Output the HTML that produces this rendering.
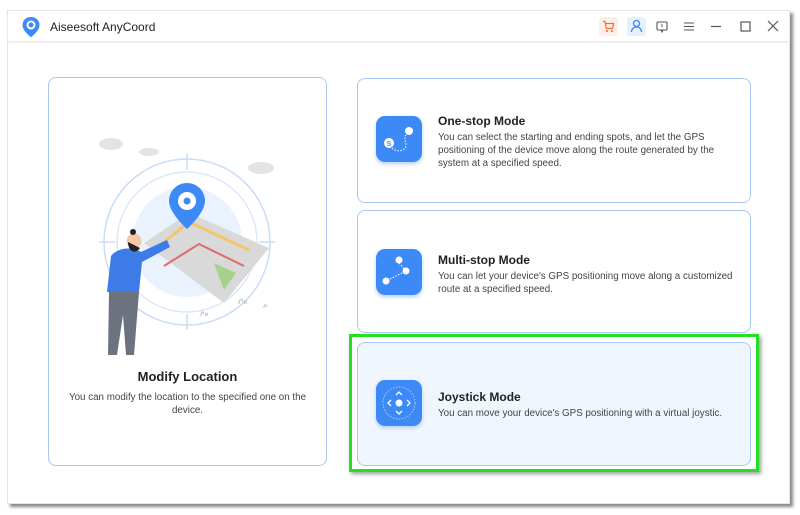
<!DOCTYPE html>
<html><head><meta charset="utf-8"><style>
*{margin:0;padding:0;box-sizing:border-box}
body{width:800px;height:515px;background:#fff;position:relative;overflow:hidden;font-family:"Liberation Sans",sans-serif;color:#333}
.win{position:absolute;left:7px;top:10px;width:783px;height:494px;background:#fff;box-shadow:3px 3px 3px #888;border:1px solid #e4e4e4}
.tb{position:absolute;left:0;top:0;right:0;height:31px;border-bottom:1px solid #ececec;box-shadow:0 1px 2px #f0f0f0}
.title{position:absolute;left:42px;top:9px;font-size:12px;color:#222}
.card{position:absolute;border:1px solid #a9c8f2;border-radius:8px;background:#fff}
.ic{position:absolute;left:18px;width:46px;height:46px;border-radius:9px;background:#3d8af7;box-shadow:0 2px 4px #b8cff0}
.h{position:absolute;left:80px;font-size:12px;font-weight:bold;color:#222}
.p{position:absolute;left:80px;font-size:9.8px;line-height:13px;color:#444;width:305px}
</style></head><body>
<div class="win">
<div class="tb">
<svg style="position:absolute;left:13px;top:5px" width="20" height="22" viewBox="0 0 20 22"><path d="M10 1C5 1 1.5 4.7 1.5 9.2c0 5.5 8.5 12 8.5 12s8.5-6.5 8.5-12C18.5 4.7 15 1 10 1z" fill="#3d8af7"/><circle cx="10" cy="9" r="4.5" fill="#fff"/><circle cx="10" cy="9" r="2.5" fill="#3d8af7"/></svg>
<div class="title">Aiseesoft AnyCoord</div>
<div style="position:absolute;left:591px;top:6px;width:19px;height:19px;background:#fdeee8;border-radius:3px"></div>
<svg style="position:absolute;left:594px;top:9px" width="13" height="13" viewBox="0 0 13 13"><path d="M1 1.5h2l1.5 7h6l1-5H4" fill="none" stroke="#f26b3a" stroke-width="1.2"/><circle cx="5" cy="11" r="1" fill="#f26b3a"/><circle cx="10" cy="11" r="1" fill="#f26b3a"/></svg>
<div style="position:absolute;left:619px;top:6px;width:19px;height:19px;background:#e6f0fd;border-radius:3px"></div>
<svg style="position:absolute;left:622px;top:8px" width="13" height="14" viewBox="0 0 13 14"><circle cx="6.5" cy="4.5" r="3" fill="none" stroke="#3d8af7" stroke-width="1.3"/><path d="M1.5 13c0-3 2.2-5 5-5s5 2 5 5" fill="none" stroke="#3d8af7" stroke-width="1.3"/></svg>
<svg style="position:absolute;left:648px;top:10px" width="12" height="12" viewBox="0 0 12 12"><rect x="1" y="1" width="10" height="8" rx="1" fill="none" stroke="#555" stroke-width="1.1"/><path d="M5 9l1 2 1-2" stroke="#555" fill="none"/><path d="M6 3v3" stroke="#555"/></svg>
<svg style="position:absolute;left:675px;top:10px" width="12" height="11"><path d="M1 2h10M1 5.5h10M1 9h10" stroke="#555" stroke-width="1.1"/></svg>
<svg style="position:absolute;left:702px;top:10px" width="12" height="11"><path d="M1 5.5h10" stroke="#555" stroke-width="1.2"/></svg>
<svg style="position:absolute;left:732px;top:10px" width="12" height="11"><rect x="1" y="1" width="9" height="9" fill="none" stroke="#555" stroke-width="1.2"/></svg>
<svg style="position:absolute;left:759px;top:9px" width="12" height="12"><path d="M1 1l10 10M11 1L1 11" stroke="#555" stroke-width="1.2"/></svg>
</div>
</div>

<div class="card" style="left:48px;top:77px;width:279px;height:389px">
<svg style="position:absolute;left:40px;top:50px" width="200" height="230" viewBox="0 0 200 230">
<g fill="#e4e4e4"><ellipse cx="22" cy="16" rx="12" ry="6"/><ellipse cx="60" cy="24" rx="10" ry="4"/><ellipse cx="172" cy="40" rx="13" ry="6"/></g>
<circle cx="98" cy="114" r="83" fill="none" stroke="#c9dcf8" stroke-width="1.5"/>
<circle cx="98" cy="114" r="70" fill="none" stroke="#dce8fa" stroke-width="1.5"/>
<circle cx="98" cy="114" r="55" fill="#eaf2fd"/>
<path d="M98 26v16M98 186v16M10 114h16M170 114h16" stroke="#c9dcf8" stroke-width="1.5"/>
<path d="M55 115l45-30 80 35-45 55z" fill="#d9d9d9"/>
<path d="M65 122l35-28 60 28" stroke="#f1c76c" stroke-width="3" fill="none"/>
<path d="M75 138l35-22 45 22" stroke="#e06a6a" stroke-width="2" fill="none"/>
<path d="M125 135l22 10-12 17z" fill="#a8d08d"/>
<path d="M98 55c-10 0-18 8-18 18 0 12 18 28 18 28s18-16 18-28c0-10-8-18-18-18z" fill="#3d8af7"/>
<circle cx="98" cy="73" r="9" fill="#fff"/><circle cx="98" cy="73" r="3.5" fill="#3d8af7"/>
<path d="M22 128c6-8 20-10 30-4l26-12 3 7-28 15-3 30H18z" fill="#3d7be6"/>
<circle cx="45" cy="113" r="7.5" fill="#f2c9a8"/><path d="M39 114c0 9 7 13 12 6z" fill="#222"/><circle cx="44" cy="104" r="3" fill="#222"/>
<path d="M20 164h30l-5 63h-8l-3-40-6 40h-9z" fill="#6c737f"/>
<g stroke="#bbb" fill="none"><path d="M112 188c0-4 2-6 3-2M116 188c1-4 3-4 2 0"/><path d="M150 176c0-5 3-7 4-2M155 176c1-5 3-5 2 0"/><path d="M175 180c0-3 2-5 3-1"/></g>
</svg>
<div style="position:absolute;left:0;right:0;top:291px;text-align:center;font-size:13px;font-weight:bold;color:#222">Modify Location</div>
<div style="position:absolute;left:10px;right:10px;top:313px;text-align:center;font-size:9.8px;line-height:13px;color:#444">You can modify the location to the specified one on the<br>device.</div>
</div>

<div class="card" style="left:357px;top:78px;width:394px;height:125px">
<div class="ic" style="top:37px"><svg width="46" height="46"><circle cx="13" cy="27" r="5" fill="#fff"/><text x="13" y="30" font-size="7" font-weight="bold" fill="#3d8af7" text-anchor="middle" font-family="Liberation Sans">S</text><circle cx="33" cy="15" r="4" fill="#fff"/><path d="M16 32c5 5 15 3 14-4-1-4-2-6 0-9" stroke="#fff" stroke-dasharray="1.5 1.5" fill="none"/></svg></div>
<div class="h" style="top:35px">One-stop Mode</div>
<div class="p" style="top:52px">You can select the starting and ending spots, and let the GPS positioning of the device move along the route generated by the system at a specified speed.</div>
</div>

<div class="card" style="left:357px;top:210px;width:394px;height:123px">
<div class="ic" style="top:38px"><svg width="46" height="46"><circle cx="23" cy="11" r="3.5" fill="#fff"/><circle cx="30" cy="22" r="3.5" fill="#fff"/><circle cx="10" cy="32" r="3.5" fill="#fff"/><path d="M23 14l7 8-20 10" stroke="#fff" stroke-dasharray="1.5 1.5" fill="none"/></svg></div>
<div class="h" style="top:42px">Multi-stop Mode</div>
<div class="p" style="top:59px">You can let your device's GPS positioning move along a customized route at a specified speed.</div>
</div>

<div style="position:absolute;left:349px;top:334px;width:410px;height:138px;border:3px solid #22e022;box-shadow:2px 2px 4px #999"></div>
<div class="card" style="left:357px;top:342px;width:394px;height:124px;background:#f0f6fd">
<div class="ic" style="top:37px"><svg width="46" height="46"><circle cx="23" cy="23" r="16" fill="none" stroke="#a8ccfb" stroke-dasharray="1.5 1.5"/><circle cx="23" cy="23" r="3.5" fill="#fff"/><path d="M20 15l3-3 3 3M20 31l3 3 3-3M15 20l-3 3 3 3M31 20l3 3-3 3" stroke="#fff" stroke-width="1.3" fill="none"/></svg></div>
<div class="h" style="top:47px">Joystick Mode</div>
<div class="p" style="top:64px;width:310px">You can move your device's GPS positioning with a virtual joystic.</div>
</div>
</body></html>
